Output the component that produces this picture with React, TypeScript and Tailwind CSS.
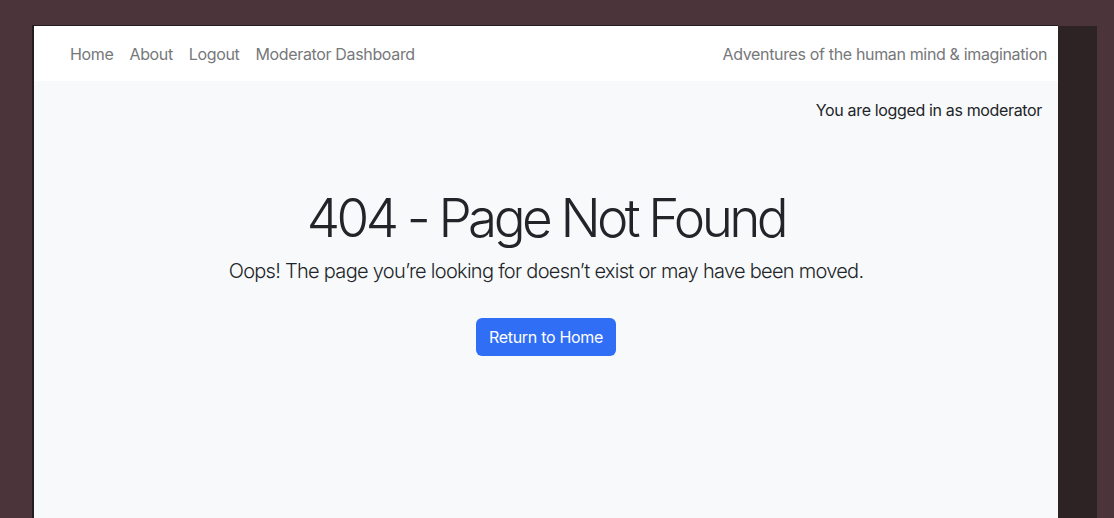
import React from "react";

export default function App() {
  return (
    <div
      className="w-full h-[518px] overflow-hidden bg-[#4b353a] pt-[25px] pl-[32px]"
      style={{ fontFamily: "Inter, 'Noto Sans', sans-serif" }}
    >
      <div className="flex h-[493px]">
        <div className="w-[1026px] h-full flex flex-col border-l-2 border-t border-[#231d1f]">
          <nav className="h-[55px] bg-white flex items-center justify-between pl-[28px] pr-[11px] text-[16px] text-[#76787a] tracking-[-0.35px]">
            <div className="flex items-center">
              <a className="px-[8px]">Home</a>
              <a className="px-[8px]">About</a>
              <a className="px-[8px]">Logout</a>
              <a className="px-[8px]">Moderator Dashboard</a>
            </div>
            <div>Adventures of the human mind &amp; imagination</div>
          </nav>
          <main className="flex-1 bg-[#f8f9fa] text-[#212529]">
            <div className="flex justify-end pr-[16px] pt-[17px] text-[16px] leading-[24px] tracking-[-0.35px]">
              You are logged in as moderator
            </div>
            <div className="flex flex-col items-center mt-[63px]">
              <h1 className="text-[53px] leading-[67px] font-light tracking-[-3.6px]">404 - Page Not Found</h1>
              <p className="mt-[4px] text-[20px] leading-[30px] font-light tracking-[-0.72px]">
                Oops! The page you’re looking for doesn’t exist or may have been moved.
              </p>
              <button className="mt-[32px] h-[38px] px-[13px] rounded-[6px] bg-[#2f6ef5] text-white text-[16px] tracking-[-0.3px]">
                Return to Home
              </button>
            </div>
          </main>
        </div>
        <div className="w-[39px] h-full mt-[1px] bg-[#2e2324]" />
      </div>
    </div>
  );
}
